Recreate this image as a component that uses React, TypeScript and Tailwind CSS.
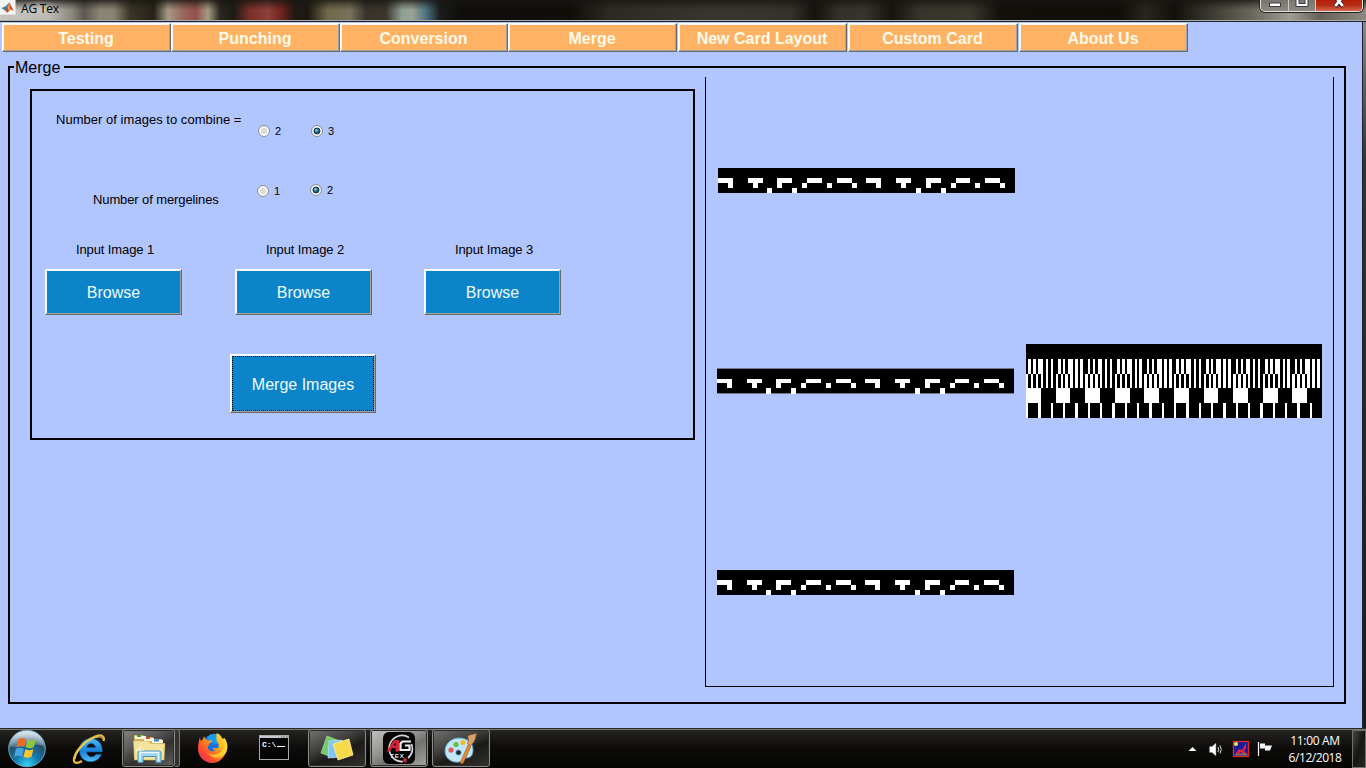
import React from "react";

const tabs = [
  { label: "Testing", cls: "w-[169px]" },
  { label: "Punching", cls: "w-[169px]" },
  { label: "Conversion", cls: "w-[168px]" },
  { label: "Merge", cls: "w-[169px]" },
  { label: "New Card Layout", cls: "ml-px w-[169px]" },
  { label: "Custom Card", cls: "ml-px w-[170px]" },
  { label: "About Us", cls: "ml-px w-[169px]" },
];

const bevel =
  "border border-t-white border-l-white border-r-[#66696d] border-b-[#66696d] shadow-[inset_-1px_-1px_0_#a3a3a0,inset_1px_1px_0_#f4f6f6]";

// Each entry is [row, first column, column count] on a 60 x 5 grid.
const stripCells: number[][] = [
  ...[0, 6, 12, 18, 24, 30, 36, 42, 48, 54].map((c) => [2, c, 3]),
  ...[2, 7, 12, 17, 22, 27, 32, 37, 42, 47, 52, 57].map((c) => [3, c, 1]),
  ...[10, 15, 40, 45].map((c) => [4, c, 1]),
];

const evenRows = [0, 5, 10, 15, 20, 25];
const offsetRows = [0, 6, 11, 15, 20, 26];

function PatternStrip({ className, offset }: { className: string; offset?: boolean }) {
  const px = (c: number) => Math.ceil((c * 297) / 60 - 0.5);
  const rows = offset ? offsetRows : evenRows;
  const h = rows[5];
  return (
    <svg width="297" height={h} viewBox={"0 0 297 " + h} shapeRendering="crispEdges" className={className}>
      <rect width="297" height={h} fill="#000" />
      {offset && <rect width="297" height="1" fill="#74748c" />}
      {offset && <rect y="25" width="297" height="1" fill="#74748c" />}
      {stripCells.map(([r, c, n], i) => (
        <rect key={i} x={px(c)} y={rows[r]} width={px(c + n) - px(c)} height={rows[r + 1] - rows[r]} fill="#fff" />
      ))}
    </svg>
  );
}

function MergedPattern({ className }: { className: string }) {
  const px = (c: number) => Math.round((c * 296) / 120);
  const cols = Array.from({ length: 120 }, (_, i) => i);
  const bands = [
    { y: 15, h: 15, on: (c: number) => [1, 3, 5, 6, 8, 10].includes(c % 12) },
    { y: 30, h: 14, on: (c: number) => c % 2 === 0 },
    { y: 44, h: 15, on: (c: number) => c % 12 < 6 },
    { y: 59, h: 15, on: (c: number) => c % 5 === 0 },
  ];
  return (
    <svg width="296" height="74" viewBox="0 0 296 74" shapeRendering="crispEdges" className={className}>
      <rect width="296" height="74" fill="#000" />
      {bands.map((b) =>
        cols
          .filter(b.on)
          .map((c) => (
            <rect key={b.y + "-" + c} x={px(c)} y={b.y} width={px(c + 1) - px(c)} height={b.h} fill="#fff" />
          ))
      )}
    </svg>
  );
}

function Radio({ label, on, className }: { label: string; on?: boolean; className: string }) {
  return (
    <div className={"flex h-[13px] items-center gap-[5px] " + className}>
      <svg width="12" height="12" viewBox="0 0 12 12">
        <circle cx="6" cy="6" r="5.5" fill="#f6f6f6" stroke="#8b8d91" />
        <circle cx="6" cy="6" r="3.8" fill={on ? "#e4eef4" : "#dcdcdc"} stroke="#fff" strokeWidth=".8" />
        {on && <circle cx="6" cy="6" r="3" fill="#1d6686" stroke="#143247" />}
        {on && <circle cx="5.4" cy="5.2" r="1.2" fill="#7fd4ea" />}
      </svg>
      <span className="pt-[2px] text-[11px] leading-[13px]">{label}</span>
    </div>
  );
}

function TitleBar() {
  return (
    <div className="flex h-[22px] justify-between overflow-hidden border-b border-[#20222c] bg-[linear-gradient(180deg,rgba(24,22,18,0.8)_0px,rgba(24,22,18,0.35)_5px,rgba(24,22,18,0)_10px),linear-gradient(90deg,#c9c6c0_0px,#bab7b1_50px,#8c8880_72px,#5b564e_84px,#8b8574_100px,#8a8372_114px,#3a3528_130px,#262218_154px,#a59a85_168px,#9a6a5e_182px,#94504a_196px,#a69c85_208px,#2a271f_220px,#1c1a14_234px,#7a2f28_250px,#8d4039_268px,#6f221c_282px,#221a12_294px,#1b1912_308px,#72694a_328px,#77725c_350px,#37332b_366px,#3a362c_386px,#8fa095_402px,#9da496_412px,#4a7381_426px,#1a1c1a_440px,#0f0e0a_460px,#0e0d08_570px,#2d2a23_610px,#39362f_720px,#35322b_790px,#14120d_815px,#35312a_840px,#37342d_865px,#15130d_892px,#37342c_920px,#3a372f_970px,#12100b_1000px,#0e0d08_1120px,#28261e_1145px,#12100b_1175px,#3c3931_1210px,#67645c_1250px,#a09d92_1290px,#67625a_1320px,#8d8a80_1366px)] shadow-[inset_0_-1px_0_#a9a9b0]">
      <div className="flex items-start">
        <svg width="16" height="15" viewBox="0 0 16 15" className="shrink-0">
          <rect width="15.5" height="14.5" fill="#f5f5f5" />
          <path d="M1.5 8 6 6 9.2 2.5 7.4 9 5.2 10.8Z" fill="#3d7fae" />
          <path d="M5.2 10.8 7.6 7.5 9.3 2.2 10.8 5.5 14 11 10.7 9.3 7.5 12.8Z" fill="#c9451d" />
          <path d="m9.3 2.2.8 7.2-1.4 2-1-3.9Z" fill="#f09a3a" />
        </svg>
        <span className="ml-[5px] bg-[radial-gradient(closest-side,rgba(215,213,208,0.55),rgba(215,213,208,0))] font-['Open_Sans','Noto_Sans',sans-serif] text-[12px] leading-[17px] tracking-[-0.2px] whitespace-nowrap text-black">
          AG Tex
        </span>
      </div>
      <div className="mr-[3px] flex h-[12px] w-[103px] overflow-hidden rounded-b-[5px] border border-t-0 border-[#e2e2e0] shadow-[0_0_0_1px_#24221e]">
        <div className="w-[28px] border-r border-[#ccc] bg-gradient-to-b from-[#77756d] to-[#8d8a83]">
          <svg width="28" height="11">
            <rect x="8.5" y="3" width="11" height="3.5" fill="#fff" stroke="#3c3c45" />
          </svg>
        </div>
        <div className="w-[27px] border-r border-[#ccc] bg-gradient-to-b from-[#77756d] to-[#8d8a83]">
          <svg width="26" height="11">
            <rect x="8.5" y="-3" width="9" height="8" fill="none" stroke="#3c3c45" strokeWidth="4" />
            <rect x="8.5" y="-3" width="9" height="8" fill="none" stroke="#fff" strokeWidth="2" />
          </svg>
        </div>
        <div className="flex-1 bg-gradient-to-b from-[#b51c07] via-[#b72d16] to-[#d3674e]">
          <svg width="47" height="11">
            <path d="m19 6.500 8-10m-8 0 8 10" stroke="#40242a" strokeWidth="4.500" />
            <path d="m19.300 6 7.500-9.500m-7.500 0 7.500 9.500" stroke="#fff" strokeWidth="2.800" />
          </svg>
        </div>
      </div>
    </div>
  );
}

function BrowseColumn({ n, className }: { n: number; className: string }) {
  return (
    <div className={"flex w-[137px] flex-col items-center " + className}>
      <span className="mb-[11px] pl-[3px] text-[13px] leading-[16px] tracking-[-0.1px] whitespace-nowrap">Input Image {n}</span>
      <button className={"h-[46px] w-[137px] bg-[#0b84c9] pt-px text-[16px] text-[#effbff] " + bevel}>Browse</button>
    </div>
  );
}

function StartOrb() {
  return (
    <svg width="40" height="40" viewBox="0 0 40 40">
      <defs>
        <radialGradient id="orb" cx=".5" cy=".95" r=".85">
          <stop offset="0" stopColor="#35d3f7" />
          <stop offset=".4" stopColor="#1278ad" />
          <stop offset=".75" stopColor="#28506b" />
          <stop offset="1" stopColor="#a9bdc6" />
        </radialGradient>
        <linearGradient id="gloss" x1="0" y1="0" x2="0" y2="1">
          <stop offset="0" stopColor="#e8f1f4" stopOpacity=".85" />
          <stop offset="1" stopColor="#8ab0c2" stopOpacity=".35" />
        </linearGradient>
      </defs>
      <circle cx="20" cy="19.500" r="18.300" fill="url(#orb)" stroke="#6ba9c3" strokeWidth="1" />
      <path d="M3 17C4 7 11 2 20 2s16 5 17 15c-9-4-22 4-34 0Z" fill="url(#gloss)" />
      <path d="M11.500 10c3-1.600 5-1.300 7.500-.2l-1.700 8c-2.500-1.200-5-1.200-7.800.2Z" fill="#ee6a25" />
      <path d="M20.500 10.500c2.700 1.300 5.300 1.200 8.300-.2l-2 8c-2.700 1.300-5.300 1.300-8-.1Z" fill="#8fc63c" />
      <path d="M9 19.700c2.800-1.300 5.200-1.200 7.800.1l-1.900 7.700c-2.500-1.200-4.900-1.100-7.700.2Z" fill="#4aa4df" />
      <path d="M18.400 20.200c2.600 1.300 5.200 1.200 8 0l-1.900 7.600c-2.700 1.300-5.300 1.300-8 0Z" fill="#fcc72e" />
    </svg>
  );
}

function IeIcon() {
  return (
    <svg width="34" height="34" viewBox="0 0 34 34">
      <defs>
        <linearGradient id="ie" x1="0" y1="0" x2="0" y2="1">
          <stop offset="0" stopColor="#4bb9f5" />
          <stop offset=".55" stopColor="#197fd6" />
          <stop offset="1" stopColor="#52c3f4" />
        </linearGradient>
      </defs>
      <path
        d="M30.300 20H14.700c.2 5.300 7 6.300 9.300 2.200h5.600C24.500 34 7.500 31.500 7.500 18.300 7.500 2.500 31.500 2.300 30.300 20ZM14.800 15.500h8.700c-.6-5.200-8-5.200-8.700 0Z"
        fill="url(#ie)"
        stroke="#0c4d91"
        strokeWidth=".6"
      />
      <path
        d="M31.500 9C33 4 29 1.500 22 5 11.500 9.500 3 20 2 27c-.7 5 4 4.500 8 2"
        fill="none"
        stroke="#e6b93c"
        strokeWidth="2.300"
      />
      <path d="M30.500 7C29 3 22 6 18 8 9 14 4 21 3 27" fill="none" stroke="#f8e58d" strokeWidth=".8" />
    </svg>
  );
}

function FolderIcon() {
  return (
    <svg width="34" height="32" viewBox="0 0 34 32">
      <path d="M2 6V3h9l1 2h9v2h9v20H2Z" fill="#cfb55c" />
      <path d="M3 7h11V4H3Z" fill="#fbf6d7" />
      <rect x="5" y="3" width="4" height="2" fill="#2fa936" />
      <path d="M12 9h10V6H12Z" fill="#fff9e4" />
      <rect x="14" y="5" width="4" height="2" fill="#d8492f" />
      <path d="M20 11h11V8H20Z" fill="#fffbe8" />
      <rect x="22" y="7.500" width="5" height="2" fill="#2c83cc" />
      <path d="M1.500 9h15l2 2.500H33L32 28H2.500Z" fill="#f4e39a" stroke="#d1b962" strokeWidth=".6" />
      <path d="M6 30.500V21q0-2 2-2h19q2 0 2 2v9.500h-5v-6H11v6Z" fill="#9ed5ee" stroke="#4796be" />
      <path d="M8 20.500h19M8 29V21M26.500 21v8" stroke="#e7fbff" strokeWidth="1.300" />
      <path d="M8 14v8m-4-4h8" stroke="#fff" strokeWidth=".7" />
    </svg>
  );
}

function FirefoxIcon() {
  return (
    <svg width="32" height="32" viewBox="0 0 32 32">
      <defs>
        <linearGradient id="fox" x1="1" y1="0" x2="0" y2="1">
          <stop offset="0" stopColor="#fff13d" />
          <stop offset=".35" stopColor="#ffb51b" />
          <stop offset=".65" stopColor="#ff5b26" />
          <stop offset="1" stopColor="#ec1467" />
        </linearGradient>
      </defs>
      <circle cx="16" cy="15" r="12" fill="#1572e0" />
      <path d="M10 5q6-6 13-1l-1 8-9-1Z" fill="#1b9bed" />
      <path
        d="M3 5c0 1.700.3 3 .8 4L6 7l1-3c.5 2 2 3.500 4 4.500l4-.3c-.1 2-2 2.500-3 3.800.2 1.500-.6 2-1.500 3 1 5 6 5 8.500 3-2 .5-3-.5-3.500-1.500 2-1.500 4 .7 6-1 .7-4-1-5.500-2-7V1c4 1.500 5 4.500 6.500 6l1.500-1c3 4 4 9 1.500 14.500C26 27 21 31 15.500 31 7 31 1 24.500 1 17 1 12 2 9 3 5Z"
        fill="url(#fox)"
      />
      <path d="M20 1c4 2 8 7 6.500 14C25 22 17 25 11 21c5 8 17 5 19-3 1-5-1-9-3-12l-1 2c-1-3-3-6-6-7Z" fill="#ffd92e" opacity=".8" />
    </svg>
  );
}

function CmdIcon() {
  return (
    <svg width="30" height="25" viewBox="0 0 30 25">
      <rect x=".5" y=".5" width="29" height="24" fill="#050505" stroke="#aaa" />
      <rect x="1" y="1" width="28" height="2" fill="#c5c9ce" />
      <path d="M22 2h1.500m1 0H26m1 0h1.500" stroke="#555" />
      <text x="3" y="11.500" fill="#fff" fontFamily="Liberation Mono, monospace" fontSize="8" fontWeight="bold">
        C:\
      </text>
      <path d="M18 11.500h8" stroke="#fff" />
    </svg>
  );
}

function NotesIcon() {
  return (
    <svg width="34" height="30" viewBox="0 0 34 30">
      <path d="m7 3 13 5-6 17-13-5Z" fill="#78c96b" stroke="#b0e5a2" strokeWidth=".6" />
      <path d="m9 8 13-1 1 17-15 1Z" fill="#7fc4f2" stroke="#c2e8ff" strokeWidth=".6" />
      <path d="m13 11 16-5 4 16-15 5Z" fill="#f7d94c" stroke="#fff19b" strokeWidth=".8" />
    </svg>
  );
}

function AgTexIcon() {
  return (
    <svg width="32" height="32" viewBox="0 0 32 32">
      <rect width="32" height="32" rx="6" fill="#050505" />
      <path d="M26 5.500A13 13 0 1 0 20 29.500M28.500 12A13 13 0 0 1 25 26" fill="none" stroke="#d5d5d5" strokeWidth="1.700" />
      <path d="M3.500 19.500 11 8h5v11.500h-3.500V16H9l-2 3.500Zm7-6h2.200V10Z" fill="#d32335" />
      <path d="M28 9.500h-8.500l-2 2V18h9v-4.500H22" fill="none" stroke="#eee" strokeWidth="2.200" />
      <text x="7" y="26" fill="#e2e2e2" fontFamily="Liberation Sans, sans-serif" fontSize="6" fontWeight="bold" letterSpacing="1">
        TEX
      </text>
      <circle cx="22" cy="28" r="1.900" fill="#d42b3d" />
      <path d="M22 28v3.500" stroke="#d42b3d" />
    </svg>
  );
}

function PaintIcon() {
  return (
    <svg width="34" height="34" viewBox="0 0 34 34">
      <path
        d="M15 7C6 7 1 14 1 20c0 7 6 12 14 11 4-.3 3-4 7-4 5 0 7-3 7-8 0-7-5-12-14-12Z"
        fill="#c3e6f6"
        stroke="#5da6cd"
      />
      <circle cx="14.500" cy="21.500" r="2.600" fill="#20262c" stroke="#5da6cd" strokeWidth=".7" />
      <circle cx="7" cy="19" r="2.600" fill="#e0585c" />
      <circle cx="12" cy="13.500" r="2.600" fill="#62bd45" />
      <circle cx="19" cy="11.500" r="2.600" fill="#f5b92b" />
      <path d="m16 32 8-18 3 1.500-8 17Z" fill="#df8b36" stroke="#a15a19" strokeWidth=".6" />
      <path d="m23.500 13 1-4-1-4 4-1.500 5-1-1 5-2 4-3 3Z" fill="#d5a069" stroke="#86501d" strokeWidth=".6" />
    </svg>
  );
}

const taskButton =
  "flex h-[38px] items-center justify-center rounded-[3px] border border-[#8b8b89] shadow-[inset_0_0_0_1px_#2b2b2a]";

function TaskBar() {
  return (
    <div className="flex h-[40px] items-start border-t border-[#29282b] bg-gradient-to-b from-[#262522] via-[#0d0c0a] to-[#050504] shadow-[inset_0_1px_0_#777673]">
      <div className="ml-[7px] h-[39px] w-[40px] overflow-hidden">
        <StartOrb />
      </div>
      <div className="mt-[3px] ml-[25px] h-[34px] w-[34px]">
        <IeIcon />
      </div>
      <div className={"ml-[16px] w-[53px] bg-[linear-gradient(150deg,#858482_0%,#5e5d5b_32%,#31302e_60%,#62615f_100%)] " + taskButton}>
        <FolderIcon />
      </div>
      <div className="h-[38px] w-[5px] rounded-r-[3px] border border-l-0 border-[#777] bg-[#33322f]" />
      <div className="mt-[3px] ml-[17px] h-[32px] w-[32px]">
        <FirefoxIcon />
      </div>
      <div className="mt-[6px] ml-[30px] h-[25px] w-[30px]">
        <CmdIcon />
      </div>
      <div className={"ml-[19px] w-[58px] bg-[linear-gradient(155deg,#737371_0%,#454442_35%,#1b1a18_60%,#33312e_100%)] " + taskButton}>
        <NotesIcon />
      </div>
      <div className={"ml-[4px] w-[58px] bg-[linear-gradient(150deg,#c2c2c1_0%,#949493_40%,#727271_60%,#a5a5a4_100%)] " + taskButton}>
        <AgTexIcon />
      </div>
      <div className={"ml-[4px] w-[58px] bg-[linear-gradient(155deg,#737371_0%,#454442_35%,#1b1a18_60%,#33312e_100%)] " + taskButton}>
        <PaintIcon />
      </div>
      <div className="flex-1" />
      <svg width="86" height="20" viewBox="0 0 86 20" className="mt-[10px] mr-[10px] shrink-0">
        <path d="m0 12 4-4 4 4Z" fill="#fff" transform="translate(.5 0)" />
        <path d="M21.500 7.500H24L28 4v13l-4-3.500h-2.500Z" fill="#fff" stroke="#777" strokeWidth=".5" />
        <path d="M30 8q1.500 2.500 0 5M32 6.500q2.500 4 0 8" fill="none" stroke="#ddd" strokeWidth="1" />
        <rect x="45.500" y="2.500" width="15" height="15" fill="#181c99" stroke="#dc2a2c" strokeWidth="1.300" />
        <circle cx="48" cy="5" r="2" fill="#f7e648" />
        <path d="m47 15 4-5 3 1 4-7v5l-2 3 3 3h-4l-2-2-3 2Z" fill="#e4213b" />
        <path d="M46 16.500h14l-2-2.500-10 1Z" fill="#84706b" />
        <path d="M70.500 3v14" stroke="#fff" strokeWidth="1.200" />
        <path d="M72 4.500h5v2h7l-2 5h-5V9.500h-5Z" fill="#f5f5f5" />
      </svg>
      <div className="mt-[3px] flex w-[62px] flex-col items-center font-['Open_Sans','Noto_Sans',sans-serif] text-[12px] leading-[17px] text-white">
        <span className="tracking-[-0.35px] whitespace-nowrap">11:00 AM</span>
        <span className="tracking-[-0.45px] whitespace-nowrap">6/12/2018</span>
      </div>
      <div className="mt-px ml-[6px] h-[38px] w-[14px] border border-[#6f6f6c] bg-gradient-to-br from-[#484744] via-[#171613] to-[#282724]" />
    </div>
  );
}

export default function App() {
  return (
    <div className="flex h-[768px] w-[1366px] flex-col overflow-hidden font-['Liberation_Sans',Arial,sans-serif] text-black">
      <TitleBar />
      <div className="flex h-[706px]">
        <main className="flex w-[1362px] flex-col bg-[#b1c5ff]">
          <nav className="mt-px ml-[2px] flex h-[29px]">
            {tabs.map((t) => (
              <button
                key={t.label}
                className={
                  "shrink-0 bg-[#ffb164] pt-[2px] pr-px text-[16px] leading-[23px] font-bold whitespace-nowrap text-[#fffbea] " +
                  bevel +
                  " " +
                  t.cls
                }
              >
                {t.label}
              </button>
            ))}
          </nav>
          <section className="relative mt-[14px] ml-[8px] flex h-[638px] w-[1338px] items-start border-2 border-black">
            <span className="absolute top-[-10px] left-[4px] h-[20px] w-[50px] bg-[#b1c5ff] pl-px text-[16px] leading-[20px]">
              Merge
            </span>
            <div className="mt-[21px] ml-[20px] h-[351px] w-[665px] border-2 border-black">
              <div className="flex h-[79px]">
                <span className="mt-[21px] ml-[24px] w-[201px] text-[13px] leading-[16px] tracking-[0.03px] whitespace-nowrap">
                  Number of images to combine =
                </span>
                <Radio label="2" className="mt-[33px] ml-px w-[53px]" />
                <Radio label="3" on className="mt-[33px]" />
              </div>
              <div className="flex h-[72px]">
                <span className="mt-[22px] ml-[61px] w-[164px] text-[13px] leading-[16px] tracking-[-0.11px] whitespace-nowrap">
                  Number of mergelines
                </span>
                <Radio label="1" className="mt-[14px] w-[53px]" />
                <Radio label="2" on className="mt-[13px]" />
              </div>
              <div className="ml-[13px] flex">
                <BrowseColumn n={1} className="" />
                <BrowseColumn n={2} className="ml-[53px]" />
                <BrowseColumn n={3} className="ml-[52px]" />
              </div>
              <button className={"mt-[39px] ml-[198px] h-[59px] w-[146px] bg-[#0b84c9] p-px text-[16px] text-[#effbff] " + bevel}>
                <span className="flex h-full w-full items-center justify-center border border-dotted border-black pt-[3px]">
                  Merge Images
                </span>
              </button>
            </div>
            <div className="mt-[9px] ml-[10px] flex h-[610px] w-[629px] border-x border-b border-black">
              <div className="flex w-[320px] flex-col pl-[11px]">
                <PatternStrip className="mt-[91px] ml-px" />
                <PatternStrip offset className="mt-[175px]" />
                <PatternStrip className="mt-[176px]" />
              </div>
              <MergedPattern className="mt-[267px]" />
            </div>
          </section>
        </main>
        <div className="w-[4px] border-l border-[#20222c] bg-gradient-to-b from-[#8b8980] via-[#33312b] via-20% to-[#1b1a17]" />
      </div>
      <TaskBar />
    </div>
  );
}
